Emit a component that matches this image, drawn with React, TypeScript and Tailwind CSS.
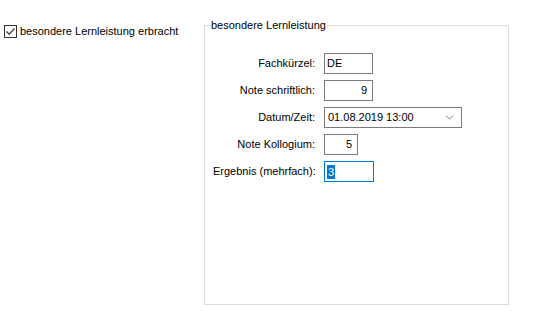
import { ChevronDown } from "lucide-react";

const font = { fontFamily: '"Liberation Sans", Arial, sans-serif' };

type FieldProps = {
  label: string;
  value: string;
  width: string;
  align?: "left" | "right";
  focused?: boolean;
};

function Field({ label, value, width, align = "left", focused }: FieldProps) {
  return (
    <>
      <div className="text-right whitespace-nowrap pr-[9px] leading-[21px]">{label}</div>
      <div
        className={`h-[21px] ${width} border flex items-center px-[2px] ${
          focused ? "border-[#0078d7]" : "border-[#7a7a7a]"
        } ${align === "right" ? "justify-end pr-[5px]" : ""}`}
      >
        {focused ? (
          <span className="bg-[#0078d7] text-white leading-[14px] px-[1px]">{value}</span>
        ) : (
          <span>{value}</span>
        )}
      </div>
    </>
  );
}

export default function App() {
  return (
    <div
      className="w-[560px] h-[336px] bg-white text-black text-[11px] flex"
      style={font}
    >
      {/* Checkbox */}
      <div className="w-[204px] pl-[4px] pt-[25px]">
        <label className="flex items-center gap-[3px]">
          <span className="w-[13px] h-[13px] border border-[#333] flex items-center justify-center bg-white">
            <svg width="11" height="11" viewBox="0 0 11 11">
              <path d="M1.5 5.5 L4.2 8.2 L9.5 2.5" fill="none" stroke="#333" strokeWidth="1.2" />
            </svg>
          </span>
          <span className="leading-[13px]">besondere Lernleistung erbracht</span>
        </label>
      </div>

      {/* Group box */}
      <fieldset className="mt-[18px] w-[305px] h-[287px] border border-[#dcdcdc] px-[8px]">
        <legend className="ml-[-2px] pr-[1px] leading-[14px]">besondere Lernleistung</legend>
        <div className="grid grid-cols-[111px_auto] gap-y-[6px] pt-[21px] items-center justify-start">
          <Field label="Fachkürzel:" value="DE" width="w-[49px]" />
          <Field label="Note schriftlich:" value="9" width="w-[49px]" align="right" />
          <div className="text-right whitespace-nowrap pr-[9px] leading-[21px]">Datum/Zeit:</div>
          <div className="h-[21px] w-[138px] border border-[#7a7a7a] flex items-center justify-between pl-[3px] pr-[5px]">
            <span>01.08.2019 13:00</span>
            <ChevronDown size={13} strokeWidth={1.3} className="text-[#444]" />
          </div>
          <Field label="Note Kollogium:" value="5" width="w-[34px]" align="right" />
          <Field label="Ergebnis (mehrfach):" value="3" width="w-[50px]" focused />
        </div>
      </fieldset>
    </div>
  );
}
